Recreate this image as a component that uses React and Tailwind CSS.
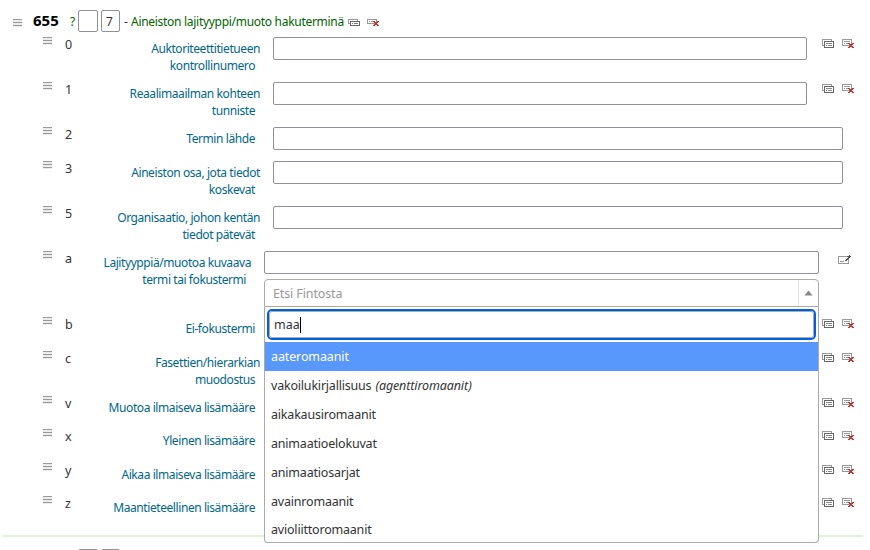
import React from "react";

function Handle() {
  return (
    <svg width="10" height="9" viewBox="0 0 10 9" shapeRendering="crispEdges" className="block shrink-0">
      <rect width="9" height="8" fill="#ececec" />
      <path d="M0 0h9v1H0zM0 3h9v1H0zM0 6h9v1H0z" fill="#999" />
    </svg>
  );
}

function Clone({ small }) {
  const h = small ? 4 : 6;
  return (
    <svg width="12" height="10" viewBox="0 0 12 10" shapeRendering="crispEdges" className="block shrink-0">
      <rect x="0.5" y="0.5" width="9" height={h} fill="#fff" stroke="#999" />
      <rect x="2.5" y="2.5" width="9" height={h} fill="#fff" stroke="#666" />
      {small ? (
        <path d="M4 4h1v1H4zM6 4h4v1H6z" fill="#777" />
      ) : (
        <path d="M4 4h1v1H4zM5 4h5v1H5zM4 6h1v1H4zM6 6h4v1H6z" fill="#888" />
      )}
    </svg>
  );
}

function Remove({ small }) {
  return (
    <svg width="12" height="10" viewBox="0 0 12 10" shapeRendering="crispEdges" className="block shrink-0">
      <rect x="0.5" y="0.5" width="9" height={small ? 4 : 6} fill="#fff" stroke="#999" />
      <path d={small ? "M2 2h1v1H2zM4 2h4v1H4z" : "M2 2h6v1H2zM2 4h1v1H2zM4 4h3v1H4z"} fill="#999" />
      <path
        transform={small ? "translate(0 -2)" : undefined}
        d="M6 4h2v1H6zM10 4h2v1h-2zM7 5h4v1H7zM8 6h2v1H8zM7 7h4v1H7zM6 8h2v1H6zM10 8h2v1h-2z"
        fill="#c9302c"
      />
    </svg>
  );
}

function Edit() {
  return (
    <svg width="13" height="10" viewBox="0 0 13 10" shapeRendering="crispEdges" className="block shrink-0">
      <rect x="0.5" y="1.5" width="10" height="7" fill="#fff" stroke="#999" />
      <path d="M2 6h4v1H2z" fill="#999" />
      <path d="M11 0h1v1h1v1h-1v1h-1v1h-1v1H9v1H7V5h1V4h1V3h1V2h-1V1h2z" fill="#555" />
    </svg>
  );
}

const rows = [
  { code: "0", lines: ["Auktoriteettitietueen", "kontrollinumero"], h: "h-[45px]", input: "short" },
  { code: "1", lines: ["Reaalimaailman kohteen", "tunniste"], h: "h-[45px]", input: "short" },
  { code: "2", lines: ["Termin lähde"], h: "h-[34px]", input: "long" },
  { code: "3", lines: ["Aineiston osa, jota tiedot", "koskevat"], h: "h-[45px]", input: "long" },
  { code: "5", lines: ["Organisaatio, johon kentän", "tiedot pätevät"], h: "h-[45px]", input: "long" },
  { code: "a", lines: ["Lajityyppiä/muotoa kuvaava", "termi tai fokustermi"], h: "h-[66px]", input: "picker" },
  { code: "b", lines: ["Ei-fokustermi"], h: "h-[34px]" },
  { code: "c", lines: ["Fasettien/hierarkian", "muodostus"], h: "h-[45px]" },
  { code: "v", lines: ["Muotoa ilmaiseva lisämääre"], h: "h-[33px]" },
  { code: "x", lines: ["Yleinen lisämääre"], h: "h-[34px]" },
  { code: "y", lines: ["Aikaa ilmaiseva lisämääre"], h: "h-[33px]" },
  { code: "z", lines: ["Maantieteellinen lisämääre"], h: "h-[39px]" },
];

const options = [
  ["vakoilukirjallisuus", "(agenttiromaanit)"],
  ["aikakausiromaanit"],
  ["animaatioelokuvat"],
  ["animaatiosarjat"],
  ["avainromaanit"],
  ["avioliittoromaanit"],
];

const box = "h-[23px] rounded-[2px] border border-[#8f8f9d] bg-white";

function Picker() {
  return (
    <div className="relative w-[555px] shrink-0">
      <div className={box} />
      <div className="mt-[5px] flex h-[28px] items-center rounded-t-[4px] border border-[#aaa] bg-white">
        <span className="grow pl-2 pt-[3px] text-[12.5px] leading-none tracking-[-0.12px] text-[#999]">Etsi Fintosta</span>
        <span className="flex h-full w-[20px] items-center justify-center border-l border-[#e4e4e4]">
          <svg width="9" height="6" viewBox="0 0 9 6"><path d="M0.5 5.5 4.5 0.5 8.5 5.5z" fill="#888" /></svg>
        </span>
      </div>
      <div className="absolute left-0 top-[56px] z-10 h-[236px] w-full overflow-hidden rounded-b-[4px] border border-t-0 border-[#aaa] bg-white text-[12.5px] tracking-[-0.2px] text-[#333]">
        <div className="mx-[2px] mt-[2px] flex h-[31px] items-center rounded-[5px] border-2 border-[#0060df] bg-white">
          <div className="flex h-full w-full items-center rounded-[3px] border border-[#aaa] pl-1">
            <span className="pt-[2px] tracking-normal">maa</span>
            <span className="h-[16px] w-px bg-black" />
          </div>
        </div>
        <div className="mt-[2px] flex h-[29px] items-center bg-[#5897fb] px-[6px] pt-[1px] tracking-[-0.12px] text-white">aateromaanit</div>
        {options.map(([name, alt], i) => (
          <div key={name} className={`flex h-[29px] items-center gap-1 px-[6px] ${i < 5 ? "pt-[2px]" : ""}`}>
            <span>{name}</span>
            {alt && <i className="tracking-[-0.12px]">{alt}</i>}
          </div>
        ))}
      </div>
    </div>
  );
}

function Row({ code, lines, h, input }) {
  const picker = input === "picker";
  return (
    <div className={`flex items-start ${h}`}>
      <div className="w-[22px] shrink-0"><Handle /></div>
      <div className="-mt-px w-[26px] shrink-0 text-[12.5px] leading-[17px] text-[#333]">{code}</div>
      <div className={`${picker ? "w-[160px]" : "w-[169px]"} shrink-0 pt-[3px] text-right text-[12px] leading-[17px] tracking-[-0.42px] text-[#006788]`}>
        {lines.map((line, i) => (
          <div key={line} className={i === lines.length - 1 ? "pr-[5px]" : ""}>{line}</div>
        ))}
      </div>
      <div className={`${picker ? "w-[571px]" : "w-[562px]"} flex shrink-0 pl-[13px]`}>
        {input === "short" && <div className={`${box} w-[534px]`} />}
        {input === "long" && <div className={`${box} w-[570px] shrink-0`} />}
        {picker && <Picker />}
      </div>
      {picker && <div className="pl-4 pt-[4px]"><Edit /></div>}
      {(input === "short" || !input) && (
        <div className="flex gap-2 pt-[2px]"><Clone /><Remove /></div>
      )}
    </div>
  );
}

export default function App() {
  return (
    <div className="h-[550px] w-[870px] overflow-hidden bg-white font-['Noto_Sans','Open_Sans',sans-serif]">
      <div className="flex h-[37px] items-start pl-[13px] pt-[10px] text-[12px]">
        <div className="w-[20px] pt-[9px]"><Handle /></div>
        <div className="-mt-px w-[37px] text-[15px] font-bold leading-[22px] text-black">655</div>
        <div className="w-[8px] leading-[23px] text-[#006400]">?</div>
        <div className="h-[22px] w-[20px] rounded-[2px] border border-[#8f8f9d]" />
        <div className="ml-[3px] h-[22px] w-[19px] rounded-[2px] border border-[#8f8f9d] pl-1 leading-[22px] text-[#333]">7</div>
        <div className="ml-[4px] w-[7px] leading-[23px] text-[#333]">-</div>
        <div className="w-[217px] whitespace-nowrap leading-[23px] tracking-[-0.29px] text-[#006400]">Aineiston lajityyppi/muoto hakuterminä</div>
        <div className="flex gap-[7px] pt-[9px]"><Clone small /><Remove small /></div>
      </div>
      <div className="pl-[43px]">
        {rows.map((row) => <Row key={row.code} {...row} />)}
      </div>
      <div className="ml-[3px] h-[2px] w-[860px] bg-[#e1f3da]" />
      <div className="flex gap-[3px] pl-[78px] pt-[12px]">
        <div className="h-[22px] w-[20px] rounded-[2px] border border-[#8f8f9d]" />
        <div className="h-[22px] w-[19px] rounded-[2px] border border-[#8f8f9d]" />
      </div>
    </div>
  );
}
